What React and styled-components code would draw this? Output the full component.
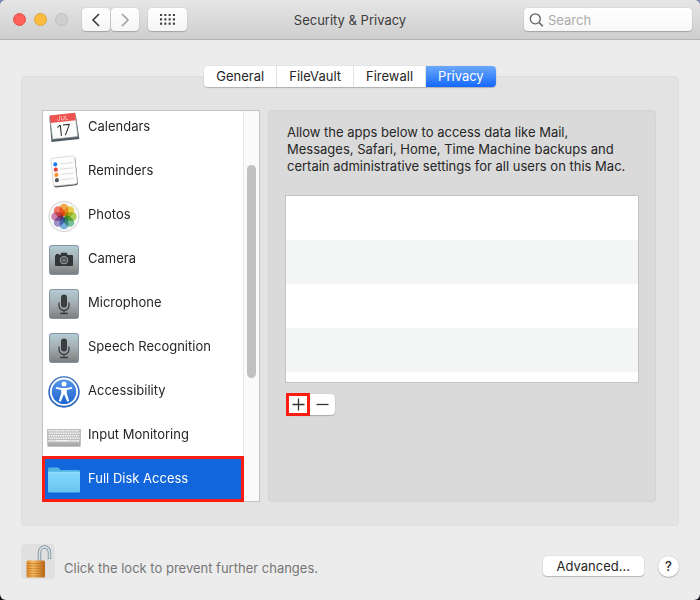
import React, { useState } from 'react';
import styled, { createGlobalStyle, css } from 'styled-components';

const GlobalStyle = createGlobalStyle`
  * {
    box-sizing: border-box;
  }
  body {
    margin: 0;
    background: linear-gradient(#8088b4, #12121c);
    font-family: Inter, 'Liberation Sans', sans-serif;
    font-size: 13px;
    color: #262626;
  }
  button, input {
    font: inherit;
    color: inherit;
  }
`;

const Window = styled.div`
  display: flex;
  flex-direction: column;
  min-height: 100vh;
  overflow: hidden;
  border-radius: 6px;
  background-color: #ececec;
`;

const TitleBar = styled.header`
  display: grid;
  grid-template-columns: 1fr auto 1fr;
  align-items: center;
  height: 40px;
  padding: 0 8px;
  border-bottom: 1px solid #b4b4b4;
  background: linear-gradient(#e6e6e6, #cecece);
`;

const BarLeft = styled.div`
  display: flex;
  align-items: center;
  padding-left: 5px;
`;

const TrafficLight = styled.button`
  width: 13px;
  height: 13px;
  margin-right: 8px;
  padding: 0;
  border: 1px solid ${({ $border }) => $border};
  border-radius: 50%;
  background-color: ${({ $color }) => $color};
`;

const raised = css`
  border: none;
  background-color: #ffffff;
  box-shadow: 0 0 1px rgba(0, 0, 0, 0.3), 0 1px 1px rgba(0, 0, 0, 0.2);
`;

const BarButton = styled.button`
  ${raised}
  display: flex;
  align-items: center;
  justify-content: center;
  width: ${({ $wide }) => ($wide ? '39px' : '28px')};
  height: 23px;
  padding: 0;
  border-radius: 4px;
  background: linear-gradient(#fefefe, #f5f5f5);
  color: ${({ disabled }) => (disabled ? '#9c9c9c' : '#404040')};
`;

const NavButtons = styled.div`
  display: flex;
  gap: 1px;
  margin: 0 9px 0 6px;
`;

const Title = styled.h1`
  margin: 0;
  font-size: 13px;
  font-weight: 400;
  color: #3c3c3c;
`;

const SearchBox = styled.label`
  ${raised}
  display: flex;
  align-items: center;
  justify-self: end;
  width: 168px;
  height: 23px;
  padding: 0 5px;
  border-radius: 4px;
  background: linear-gradient(#ffffff, #f7f7f7);
  color: #606060;
`;

const SearchInput = styled.input`
  flex: 1;
  min-width: 0;
  padding: 0 0 0 4px;
  border: none;
  outline: none;
  background: none;
  &::placeholder {
    color: #ababab;
    opacity: 1;
  }
`;

const Content = styled.main`
  display: flex;
  flex-direction: column;
  flex: 1;
  padding: 26px 21px 20px;
`;

const Tabs = styled.div`
  ${raised}
  z-index: 1;
  display: flex;
  align-self: center;
  height: 21px;
  margin-bottom: -11px;
  overflow: hidden;
  border-radius: 4px;
`;

const Tab = styled.button`
  padding: 0 12px;
  border: none;
  border-right: 1px solid #e2e2e2;
  background: #ffffff;
  line-height: 21px;
  &:last-child {
    border-right: none;
  }
  ${({ $active }) => $active && css`
    background: linear-gradient(#6aa9fb, #1468fb);
    color: #ffffff;
  `}
`;

const Panel = styled.section`
  display: flex;
  gap: 8px;
  padding: 33px 22px 23px 20px;
  border: 1px solid #dddddd;
  border-radius: 4px;
  background-color: #e3e3e3;
`;

const Sidebar = styled.div`
  display: flex;
  width: 218px;
  height: 392px;
  border: 1px solid #c3c3c3;
  background-color: #ffffff;
`;

const PaneList = styled.nav`
  z-index: 1;
  display: flex;
  flex: 1;
  flex-direction: column;
  justify-content: flex-end;
  height: 390px;
`;

const PaneButton = styled.button`
  display: flex;
  flex-shrink: 0;
  align-items: center;
  gap: 8px;
  height: 44px;
  padding: 0 5px;
  border: none;
  background: none;
  text-align: left;
  white-space: nowrap;
  svg {
    flex-shrink: 0;
    overflow: visible;
  }
  ${({ $active }) => $active && css`
    background-color: #1266dc;
    color: #ffffff;
    outline: 3px solid #fb1d12;
    outline-offset: -2px;
  `}
`;

const PaneLabel = styled.span`
  padding-bottom: 2px;
`;

const ScrollTrack = styled.div`
  width: 16px;
  padding: 54px 3px 0;
  border-left: 1px solid #e8e8e8;
  background-color: #fafafa;
`;

const ScrollThumb = styled.div`
  height: 213px;
  border-radius: 5px;
  background-color: #c1c1c1;
`;

const Detail = styled.div`
  flex: 1;
  min-width: 0;
  padding: 13px 16px;
  border: 1px solid #d4d4d4;
  border-radius: 4px;
  background-color: #dadada;
`;

const Description = styled.p`
  margin: 0 0 20px 2px;
  line-height: 17px;
  white-space: nowrap;
`;

const AppList = styled.ul`
  height: 188px;
  margin: 0 0 11px;
  padding: 0;
  overflow: hidden;
  border: 1px solid #c3c3c3;
  background-color: #ffffff;
  list-style: none;
`;

const AppRow = styled.li`
  height: 44px;
  &:nth-child(even) {
    background-color: #f4f5f5;
  }
`;

const AddRemove = styled.div`
  ${raised}
  display: inline-flex;
  height: 21px;
  margin-left: 2px;
  border-radius: 4px;
`;

const SmallButton = styled.button`
  display: flex;
  align-items: center;
  justify-content: center;
  width: 22px;
  padding: 0;
  border: none;
  background: none;
  &:last-child {
    width: 26px;
  }
  ${({ $marked }) => $marked && css`
    outline: 3px solid #fb1d12;
    outline-offset: -2px;
  `}
`;

const Footer = styled.footer`
  display: flex;
  align-items: center;
  margin-top: 18px;
`;

const LockButton = styled.button`
  width: 34px;
  height: 35px;
  margin-right: 9px;
  padding: 0;
  border: none;
  border-radius: 4px;
  background-color: #e0e0e0;
  svg {
    display: block;
  }
`;

const LockText = styled.span`
  flex: 1;
  padding-top: 12px;
  color: #767676;
`;

const PushButton = styled.button`
  ${raised}
  height: 20px;
  padding: 0 14px;
  border-radius: 4px;
  line-height: 20px;
`;

const HelpButton = styled.button`
  ${raised}
  width: 21px;
  height: 21px;
  padding: 0;
  border-radius: 50%;
  font-weight: 500;
`;

const FooterActions = styled.div`
  display: flex;
  align-items: center;
  gap: 14px;
  padding-top: 9px;
`;

const CalendarIcon = () => (
  <svg width="32" height="32" viewBox="0 0 32 32">
    <g transform="rotate(-6 16 16)">
      <path d="M2.5 5h26.5l1 24.5H2z" fill="#4d5960" />
      <path d="M3 4h25.5l.3 23H3.3z" fill="#fbfbfb" stroke="#8d989d" strokeWidth=".7" />
      <path d="M3 3h25.5v7.5H3z" fill="#ed5350" />
      <text x="15.7" y="9.2" fontSize="6" textAnchor="middle" fill="#ffd6d4">JUL</text>
      <text x="15.7" y="24.5" fontSize="15" fontWeight="300" textAnchor="middle" fill="#262626">17</text>
    </g>
  </svg>
);

const RemindersIcon = () => (
  <svg width="32" height="32" viewBox="0 0 32 32">
    <g transform="rotate(-6 16 16)">
      <rect x="4.5" y="3" width="24" height="28.5" rx="2" fill="#555555" />
      <rect x="4" y="2" width="24" height="28" rx="2" fill="#fdfdfd" stroke="#c9c9c9" strokeWidth=".6" />
      {['#1d7bf5', '#e5433b', '#fa9427', '#55575e'].map((color, i) => (
        <g key={color}>
          <circle cx="8" cy={8.5 + i * 5.3} r="2.1" fill={color} />
          <path d={`M12.5 ${8.5 + i * 5.3}h13`} stroke="#d0d0d0" strokeWidth=".7" />
        </g>
      ))}
    </g>
  </svg>
);

const petals = ['#fba33a', '#eed23c', '#abd04a', '#6cc08f', '#6cacdc', '#968aca', '#cd78aa', '#f56f5c'];

const PhotosIcon = () => (
  <svg width="32" height="32" viewBox="0 0 32 32">
    <circle cx="16" cy="17.5" r="15.2" fill="#f7f7f7" stroke="#c6c6c6" strokeWidth=".8" />
    {petals.map((color, i) => (
      <rect
        key={color}
        x="11.7"
        y="4.8"
        width="8.6"
        height="12.2"
        rx="4.3"
        fill={color}
        fillOpacity=".9"
        style={{ mixBlendMode: 'multiply' }}
        transform={`rotate(${i * 45} 16 17.5)`}
      />
    ))}
  </svg>
);

const Tile = ({ id, children }) => (
  <svg width="32" height="32" viewBox="0 0 32 32">
    <defs>
      <linearGradient id={id} x1="0" y1="0" x2="0" y2="1">
        <stop offset="0" stopColor="#b5ccd7" />
        <stop offset=".5" stopColor="#a3adb0" />
        <stop offset="1" stopColor="#7c7c7c" />
      </linearGradient>
    </defs>
    <rect x="1.5" y="2.5" width="29" height="29" rx="2" fill={`url(#${id})`} stroke="#7b8b98" strokeWidth=".9" />
    {children}
  </svg>
);

const CameraIcon = () => (
  <Tile id="camera">
    <path d="M8 12V11h3v1h1.2l1.2-2.3h5.2l1.2 2.3H24q1 0 1 1v9q0 1-1 1H8q-1 0-1-1v-9q0-1 1-1z" fill="#333638" />
    <circle cx="16" cy="17.2" r="3.7" fill="#3f4446" stroke="#a4aaac" strokeWidth="1" />
    <circle cx="16" cy="17.2" r="2" fill="#6d7274" />
  </Tile>
);

const MicrophoneIcon = ({ id }) => (
  <Tile id={id}>
    <rect x="13" y="7.5" width="6" height="13" rx="3" fill="#3b3e40" />
    <path d="M11 15.5v3a5 5 0 0 0 10 0v-3M16 23.5v2.7M12 26.5h8" fill="none" stroke="#3b3e40" strokeWidth="1.3" />
  </Tile>
);

const AccessibilityIcon = () => (
  <svg width="32" height="32" viewBox="0 0 32 32">
    <defs>
      <linearGradient id="access" x1="0" y1="0" x2="0" y2="1">
        <stop offset="0" stopColor="#5598e8" />
        <stop offset="1" stopColor="#1e64cf" />
      </linearGradient>
    </defs>
    <circle cx="16" cy="17" r="15.7" fill="#2c68bd" />
    <circle cx="16" cy="16.7" r="13.2" fill="url(#access)" stroke="#ffffff" strokeWidth="1.8" />
    <circle cx="16" cy="9" r="2.5" fill="#ffffff" />
    <path d="M8 12l6 .9h4l6-.9.2 1.7-5.4 1.4v3.5l2.4 7.5-1.9.6-3-7.3h-.6l-3 7.3-1.9-.6 2.4-7.5v-3.5l-5.400-1.400z" fill="#ffffff" />
  </svg>
);

const keyRows = [10.5, 13, 15.5, 18, 20.5];

const KeyboardIcon = () => (
  <svg width="32" height="32" viewBox="1 0 32 32">
    <path d="M.3 10h33.4v16q0 1-1 1H1.3q-1 0-1-1z" fill="#adadad" />
    <path d="M.3 10h33.4v13.8H.3z" fill="#bdbdbd" />
    {keyRows.map((y, i) => (
      <path
        key={y}
        d={`M${1.5 + (i % 2) * 0.7} ${y + 1.2}h30.5`}
        stroke="#f3f3f3"
        strokeWidth="1.6"
        strokeDasharray={i === 4 ? '1.7 .6 1.7 .6 1.7 .6 13.5 .6' : '1.7 .6'}
      />
    ))}
    <path d="M.5 27.2h33" stroke="#858585" strokeWidth=".7" />
  </svg>
);

const FolderIcon = () => (
  <svg width="32" height="32" viewBox="0 0 32 32">
    <defs>
      <linearGradient id="folder" x1="0" y1="0" x2="0" y2="1">
        <stop offset="0" stopColor="#85d8fc" />
        <stop offset="1" stopColor="#68c5ef" />
      </linearGradient>
    </defs>
    <path d="M0 6q0-1.4 1.4-1.4h8q1 0 1.7.7l1.4 1.6H30.6Q32 6.9 32 8.3V12H0z" fill="#51b5e3" />
    <path d="M0 10q0-1 1-1h30q1 0 1 1v18.3q0 1.2-1.2 1.2H1.2Q0 29.5 0 28.3z" fill="url(#folder)" />
    <path d="M.5 9.2h31" stroke="#a4e4fd" strokeWidth=".6" />
  </svg>
);

const LockIcon = () => (
  <svg width="34" height="35" viewBox="0 0 34 35">
    <defs>
      <linearGradient id="brass" x1="0" x2="1">
        <stop offset="0" stopColor="#d9892b" />
        <stop offset=".35" stopColor="#f9bb60" />
        <stop offset="1" stopColor="#b9691a" />
      </linearGradient>
    </defs>
    <path d="M18.5 17V8.5a5 5.5 0 0 1 10 0V15" fill="none" stroke="#7d8d96" strokeWidth="3.4" />
    <path d="M18.5 17V8.5a5 5.5 0 0 1 10 0V14.5" fill="none" stroke="#d5e0e6" strokeWidth="1.8" />
    <rect x="5.5" y="16.5" width="18.5" height="17" rx="1.5" fill="url(#brass)" />
    {[19.5, 22, 24.5, 27, 29.5, 32].map((y) => (
      <path key={y} d={`M6 ${y}h17.5`} stroke="#a65d18" strokeOpacity=".5" strokeWidth=".8" />
    ))}
  </svg>
);

const panes = [
  { name: 'Calendars', icon: <CalendarIcon /> },
  { name: 'Reminders', icon: <RemindersIcon /> },
  { name: 'Photos', icon: <PhotosIcon /> },
  { name: 'Camera', icon: <CameraIcon /> },
  { name: 'Microphone', icon: <MicrophoneIcon id="mic" /> },
  { name: 'Speech Recognition', icon: <MicrophoneIcon id="speech" /> },
  { name: 'Accessibility', icon: <AccessibilityIcon /> },
  { name: 'Input Monitoring', icon: <KeyboardIcon /> },
  { name: 'Full Disk Access', icon: <FolderIcon /> },
];

const tabs = ['General', 'FileVault', 'Firewall', 'Privacy'];

function App() {
  const [tab, setTab] = useState('Privacy');
  const [pane, setPane] = useState('Full Disk Access');

  return (
    <>
      <GlobalStyle />
      <Window>
        <TitleBar>
          <BarLeft>
            <TrafficLight aria-label="Close" $color="#fc605b" $border="#e2504c" />
            <TrafficLight aria-label="Minimize" $color="#fdbc40" $border="#e0a237" />
            <TrafficLight aria-label="Zoom" disabled $color="#cfcfcf" $border="#bcbcbc" />
            <NavButtons>
              <BarButton aria-label="Back">
                <svg width="10" height="14" viewBox="0 0 10 14" fill="none" stroke="currentColor" strokeWidth="1.7">
                  <path d="M8 1L2 7l6 6" />
                </svg>
              </BarButton>
              <BarButton aria-label="Forward" disabled>
                <svg width="10" height="14" viewBox="0 0 10 14" fill="none" stroke="currentColor" strokeWidth="1.5">
                  <path d="M2 1l6 6-6 6" />
                </svg>
              </BarButton>
            </NavButtons>
            <BarButton aria-label="Show all" $wide>
              <svg width="15" height="11" viewBox="0 0 15 11" fill="currentColor">
                {[0, 4.3, 8.6].map((y) => [0, 4.3, 8.6, 12.9].map((x) => (
                  <rect key={`${x}-${y}`} x={x} y={y} width="2.1" height="2.1" rx=".3" />
                )))}
              </svg>
            </BarButton>
          </BarLeft>
          <Title>Security &amp; Privacy</Title>
          <SearchBox>
            <svg width="15" height="15" viewBox="0 0 15 15" fill="none" stroke="currentColor" strokeWidth="1.3">
              <circle cx="6.3" cy="6.8" r="5" />
              <path d="M9.8 10.3l4 4" strokeWidth="1.6" />
            </svg>
            <SearchInput type="text" placeholder="Search" aria-label="Search" />
          </SearchBox>
        </TitleBar>
        <Content>
          <Tabs role="tablist">
            {tabs.map((name) => (
              <Tab key={name} role="tab" aria-selected={tab === name} $active={tab === name} onClick={() => setTab(name)}>
                {name}
              </Tab>
            ))}
          </Tabs>
          <Panel>
            <Sidebar>
              <PaneList>
                {panes.map(({ name, icon }) => (
                  <PaneButton key={name} $active={pane === name} onClick={() => setPane(name)}>
                    {icon}
                    <PaneLabel>{name}</PaneLabel>
                  </PaneButton>
                ))}
              </PaneList>
              <ScrollTrack>
                <ScrollThumb />
              </ScrollTrack>
            </Sidebar>
            <Detail>
              <Description>
                Allow the apps below to access data like Mail,<br />
                Messages, Safari, Home, Time Machine backups and<br />
                certain administrative settings for all users on this Mac.
              </Description>
              <AppList>
                <AppRow />
                <AppRow />
                <AppRow />
                <AppRow />
              </AppList>
              <AddRemove>
                <SmallButton aria-label="Add" $marked>
                  <svg width="13" height="13" viewBox="0 0 13 13" stroke="#333333" strokeWidth="1.3">
                    <path d="M6.5 .5v12M.5 6.5h12" />
                  </svg>
                </SmallButton>
                <SmallButton aria-label="Remove">
                  <svg width="13" height="13" viewBox="0 0 13 13" stroke="#333333" strokeWidth="1.3">
                    <path d="M.5 6.5h12" />
                  </svg>
                </SmallButton>
              </AddRemove>
            </Detail>
          </Panel>
          <Footer>
            <LockButton aria-label="Lock">
              <LockIcon />
            </LockButton>
            <LockText>Click the lock to prevent further changes.</LockText>
            <FooterActions>
              <PushButton>Advanced...</PushButton>
              <HelpButton aria-label="Help">?</HelpButton>
            </FooterActions>
          </Footer>
        </Content>
      </Window>
    </>
  );
}

export default App;
